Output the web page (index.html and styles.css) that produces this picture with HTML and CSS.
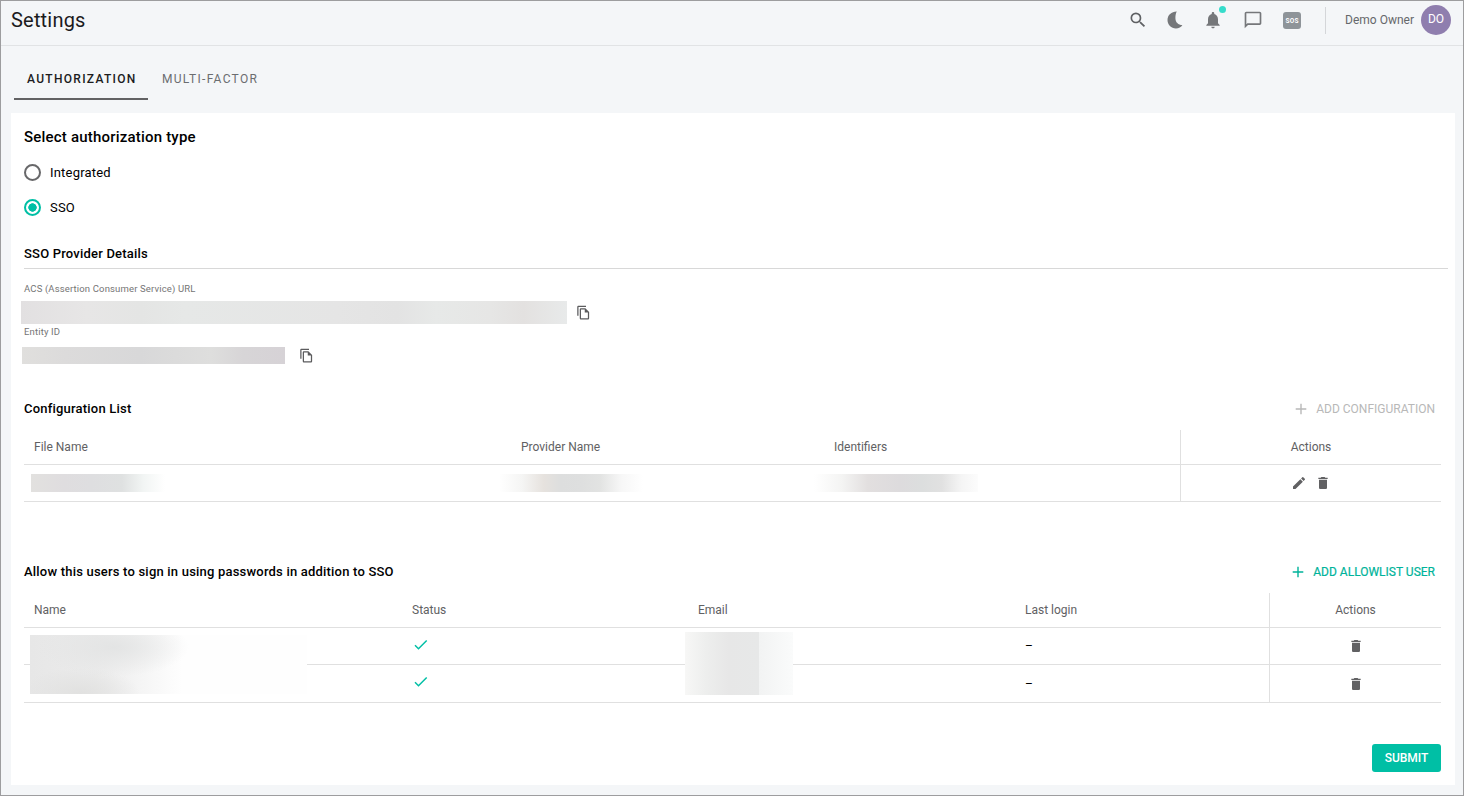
FILE: index.html
```html
<!DOCTYPE html>
<html lang="en">
<head>
<meta charset="utf-8">
<title>Settings</title>
<link rel="stylesheet" href="styles.css">
</head>
<body>
<svg class="defs" width="0" height="0">
  <symbol id="trash" viewBox="0 0 24 24"><path d="M6 19c0 1.100.9 2 2 2h8c1.100 0 2-.9 2-2V7H6v12zM19 4h-3.500l-1-1h-5l-1 1H5v2h14V4z"/></symbol>
  <symbol id="copy" viewBox="0 0 24 24"><path d="M16 1H4c-1.100 0-2 .9-2 2v14h2V3h12V1zm-1 4H8c-1.100 0-1.990.9-1.990 2L6 21c0 1.100.890 2 1.990 2H19c1.100 0 2-.9 2-2V11l-6-6zM8 21V7h6v5h5v9H8z"/></symbol>
  <symbol id="plus" viewBox="0 0 12 12"><path d="M5.300 .7h1.400v4.600h4.600v1.400H6.700v4.600H5.300V6.700H.7V5.300h4.600z"/></symbol>
  <symbol id="check" viewBox="0 0 14 12"><path d="M1 6.200 4.500 9.700 12.700 1.500" fill="none" stroke="currentColor" stroke-width="1.500"/></symbol>
</svg>
<div class="frame">
  <header class="header">
    <h1 class="title">Settings</h1>
    <div class="tools">
      <svg class="icon search" viewBox="0 0 24 24"><path d="M15.500 14h-.79l-.28-.27A6.471 6.471 0 0 0 16 9.500 6.500 6.500 0 1 0 9.500 16c1.610 0 3.090-.59 4.230-1.570l.27.28v.79l5 4.990L20.490 19l-4.990-5zm-6 0C7.010 14 5 11.990 5 9.500S7.010 5 9.500 5 14 7.010 14 9.500 11.990 14 9.500 14z"/></svg>
      <svg class="icon moon" viewBox="0 0 16 18"><path d="M9.800.6C4.600.5.500 4.100.500 9c0 4.800 3.700 8.500 8.400 8.500 2.900 0 5.300-1.400 6.500-3.400-4.200-.2-7-2.700-7-7.100 0-2.500.4-4.700 1.400-6.400z"/></svg>
      <div class="bell-wrap">
        <svg class="icon bell" viewBox="0 0 24 24"><path d="M12 22c1.100 0 2-.9 2-2h-4c0 1.100.890 2 2 2zm6-6v-5c0-3.070-1.640-5.640-4.500-6.320V4c0-.83-.67-1.500-1.500-1.500s-1.500.67-1.500 1.500v.68C7.630 5.360 6 7.920 6 11v5l-2 2v1h16v-1l-2-2z"/></svg>
        <span class="dot"></span>
      </div>
      <svg class="icon chat" viewBox="0 0 24 24"><path d="M20 2H4c-1.100 0-2 .9-2 2v18l4-4h14c1.100 0 2-.9 2-2V4c0-1.100-.9-2-2-2zm0 14H5.200L4 17.200V4h16v12z"/></svg>
      <span class="sos">SOS</span>
      <span class="sep"></span>
      <span class="user">Demo Owner</span>
      <span class="avatar">DO</span>
    </div>
  </header>
  <nav class="tabs">
    <a class="tab active">AUTHORIZATION</a>
    <a class="tab">MULTI-FACTOR</a>
  </nav>
  <main class="card">
    <h2 class="heading">Select authorization type</h2>
    <label class="option"><span class="radio"></span>Integrated</label>
    <label class="option"><span class="radio on"></span>SSO</label>
    <h3 class="subhead">SSO Provider Details</h3>
    <div class="field">
      <div class="label">ACS (Assertion Consumer Service) URL</div>
      <div class="value"><span class="mask mask-url"></span><svg class="copy"><use href="#copy"/></svg></div>
    </div>
    <div class="field">
      <div class="label">Entity ID</div>
      <div class="value value-id"><span class="mask mask-id"></span><svg class="copy"><use href="#copy"/></svg></div>
    </div>
    <section class="block config">
      <div class="block-head">
        <h3>Configuration List</h3>
        <span class="add disabled"><svg class="plus"><use href="#plus"/></svg>ADD CONFIGURATION</span>
      </div>
      <div class="row row-config row-head">
        <div>File Name</div><div>Provider Name</div><div>Identifiers</div><div class="actions">Actions</div>
      </div>
      <div class="row row-config">
        <div><span class="mask mask-file"></span></div>
        <div><span class="mask mask-provider"></span></div>
        <div><span class="mask mask-ident"></span></div>
        <div class="actions edit-actions">
          <svg class="pencil" viewBox="0 0 24 24"><path d="M3 17.250V21h3.750L17.810 9.940l-3.750-3.750L3 17.250zM20.710 7.040a1 1 0 0 0 0-1.410l-2.340-2.340a1 1 0 0 0-1.410 0l-1.830 1.830 3.750 3.750 1.830-1.830z"/></svg>
          <svg class="trash"><use href="#trash"/></svg>
        </div>
      </div>
    </section>
    <section class="block users">
      <div class="block-head">
        <h3>Allow this users to sign in using passwords in addition to SSO</h3>
        <span class="add"><svg class="plus"><use href="#plus"/></svg>ADD ALLOWLIST USER</span>
      </div>
      <div class="row row-users row-head">
        <div>Name</div><div>Status</div><div>Email</div><div>Last login</div><div class="actions">Actions</div>
      </div>
      <div class="row row-users">
        <div></div><div><svg class="check"><use href="#check"/></svg></div><div></div><div>–</div>
        <div class="actions"><svg class="trash"><use href="#trash"/></svg></div>
      </div>
      <div class="row row-users last">
        <div></div><div><svg class="check"><use href="#check"/></svg></div><div></div><div>–</div>
        <div class="actions"><svg class="trash"><use href="#trash"/></svg></div>
      </div>
      <span class="mask mask-names"></span>
      <span class="mask mask-emails"></span>
    </section>
    <div class="footer"><button class="submit">SUBMIT</button></div>
  </main>
</div>
</body>
</html>
```
FILE: styles.css
```css
* { box-sizing: border-box; }
body { margin: 0; font-family: Roboto, "Liberation Sans", sans-serif; font-size: 12px; color: #000; }
h1, h2, h3 { margin: 0; font-weight: 500; }
svg { display: block; fill: currentColor; flex: none; }
.defs { position: absolute; }
.frame { width: 1464px; height: 796px; border: 1px solid #9d9d9f; background: #f4f6f8; overflow: hidden; }

.header { height: 45px; border-bottom: 1px solid #e1e3e5; display: flex; justify-content: space-between; padding-left: 10px; }
.title { font-size: 20px; font-weight: 400; line-height: 38px; letter-spacing: .2px; color: #1b1b1d; }
.tools { display: flex; align-items: center; height: 38px; padding-right: 12px; color: #75777a; }
.search { width: 20px; height: 20px; margin-right: 19px; color: #5f6164; }
.moon { width: 16px; height: 18px; margin-right: 20px; }
.bell-wrap { position: relative; width: 20px; height: 20px; margin-right: 20px; }
.bell { width: 20px; height: 20px; }
.dot { position: absolute; left: 16px; top: -4px; width: 7px; height: 7px; border-radius: 50%; background: #35dccb; }
.chat { width: 20px; height: 20px; margin-right: 20px; }
.sos { width: 18px; height: 17px; border-radius: 3px; background: #8e9499; color: #fff; font-size: 6.500px; font-weight: 700; line-height: 18px; text-align: center; letter-spacing: .3px; }
.sep { width: 1px; height: 27px; background: #d4d6d9; margin: 0 19px 0 24px; }
.user { color: #66686b; }
.avatar { width: 30px; height: 30px; margin-left: 7px; border-radius: 50%; background: #8f7eae; color: #fff; text-align: center; line-height: 28px; }

.tabs { height: 67px; padding-left: 13px; display: flex; }
.tab { height: 54px; padding: 0 12px 0 13px; line-height: 67px; letter-spacing: 1.300px; color: #6b6d70; }
.tab.active { width: 134px; margin-right: 1px; font-weight: 500; color: #1c1c1e; border-bottom: 2px solid #626264; }

.card { width: 1444px; height: 672px; margin-left: 10px; padding: 12px 7px 0 13px; background: #fff; }
.heading { font-size: 15px; line-height: 24px; letter-spacing: .2px; }
.option { display: flex; align-items: center; height: 35px; font-size: 13px; letter-spacing: .2px; }
.heading + .option { margin-top: 6px; }
.radio { width: 17px; height: 17px; border: 2px solid #68686a; border-radius: 50%; margin-right: 9px; }
.radio.on { border-color: #00bfa5; background: radial-gradient(circle, #00bfa5 3.900px, transparent 4.500px); }
.subhead { height: 44px; padding-top: 20px; line-height: 18px; font-size: 13px; letter-spacing: .2px; border-bottom: 1px solid #d8d8d8; }
.subhead { margin-bottom: 14px; }
.label { font-size: 9.500px; line-height: 12px; letter-spacing: .15px; color: #757575; }
.value { display: flex; align-items: center; height: 23px; margin: 6px 0 2px -3px; }
.value-id { height: 17px; margin: 9px 0 0 -2px; }
.copy { width: 15px; height: 15px; color: #5b5b5d; margin-left: 9px; }
.value-id .copy { margin-left: 14px; }
.mask { display: block; flex: none; }
.mask-url { width: 546px; height: 23px; background: linear-gradient(90deg, #e2e0e1, #e7e6e6 12%, #e4e5e4 22%, #e6e8e7 30%, #e5e5e5 58%, #e3e3e3 69%, #e7e9e8 76%, #e6e6e5 86%, #e3e1e0 92%, #e8eaea); }
.mask-id { width: 263px; height: 17px; background: linear-gradient(90deg, #e0dfdd, #dcdbdb 16%, #d8d8d9 45%, #dededd 72%, #d7d5d7 84%, #d6d2d6); }

.block { width: 1417px; position: relative; }
.block-head { display: flex; justify-content: space-between; align-items: center; height: 43px; padding-right: 6px; }
.block-head h3 { font-size: 13px; letter-spacing: .2px; }
.config { margin-top: 23px; }
.users { margin-top: 48px; }
.add { display: flex; align-items: center; font-weight: 400; color: #00b39a; -webkit-text-stroke: .2px currentColor; }
.add.disabled { color: #b8b8b8; -webkit-text-stroke: 0; }
.plus { width: 12px; height: 12px; margin-right: 9px; }
.row { display: grid; height: 37px; border-bottom: 1px solid #e0e0e0; }
.row > div { display: flex; align-items: center; padding-left: 10px; }
.row-head { height: 35px; color: #616163; }
.row-config { grid-template-columns: 487px 313px 356px 261px; }
.row-users { grid-template-columns: 378px 286px 327px 254px 172px; }
.row.last { height: 38px; }
.row > .actions { justify-content: center; padding: 0; border-left: 1px solid #e0e0e0; }
.row > .edit-actions { gap: 8px; }
.pencil, .trash { width: 16px; height: 16px; color: #616163; }
.check { width: 14px; height: 12px; margin: -3px 0 0 2px; color: #00bfa5; }
.mask-file { width: 134px; height: 18px; margin: -1px 0 0 -3px; background: linear-gradient(90deg, #e2e1df, #dfdddf 24%, #dedee0 45%, #dfe1e1 68%, #f2f5f4 84%, #fff); }
.mask-provider { width: 144px; height: 18px; margin: -1px 0 0 -22px; background: linear-gradient(90deg, #fff, #f5f5f4 16%, #e6e2de 31%, #dddede 43%, #dedfdf 58%, #e2e3e2 70%, #f7f7f7 85%, #fff); }
.mask-ident { width: 164px; height: 18px; margin: -1px 0 0 -20px; background: linear-gradient(90deg, #fff, #f4f4f3 17%, #e2dfdf 33%, #dddbdd 52%, #dcdede 66%, #e1e1e1 78%, #f5f5f5 90%, #fcfcfc); }
.mask-names { position: absolute; left: 6px; top: 85px; width: 277px; height: 59px; background: radial-gradient(ellipse 75px 30px at 84px 12px, #e3e4e4, #e5e6e600), radial-gradient(ellipse 60px 25px at 50px 58px, #e1e1e0, #e5e6e600), linear-gradient(90deg, #e7e7e7, #ebebeb 24%, #f5f5f5 40%, #fefefe 55%, #fefefe); }
.mask-emails { position: absolute; left: 661px; top: 82px; width: 108px; height: 63px; background: linear-gradient(90deg, #f7f7f6, #edeeed 20%, #e7e7e7 40%, #e7e8e8 68.500%, #f2f3f3 68.500%, #fafbfb); }

.footer { width: 1417px; margin-top: 41px; display: flex; justify-content: flex-end; }
.submit { width: 69px; height: 28px; padding: 0; border: 0; border-radius: 3px; background: #00bfa5; color: #fff; font: 500 12px Roboto, sans-serif; }
```
